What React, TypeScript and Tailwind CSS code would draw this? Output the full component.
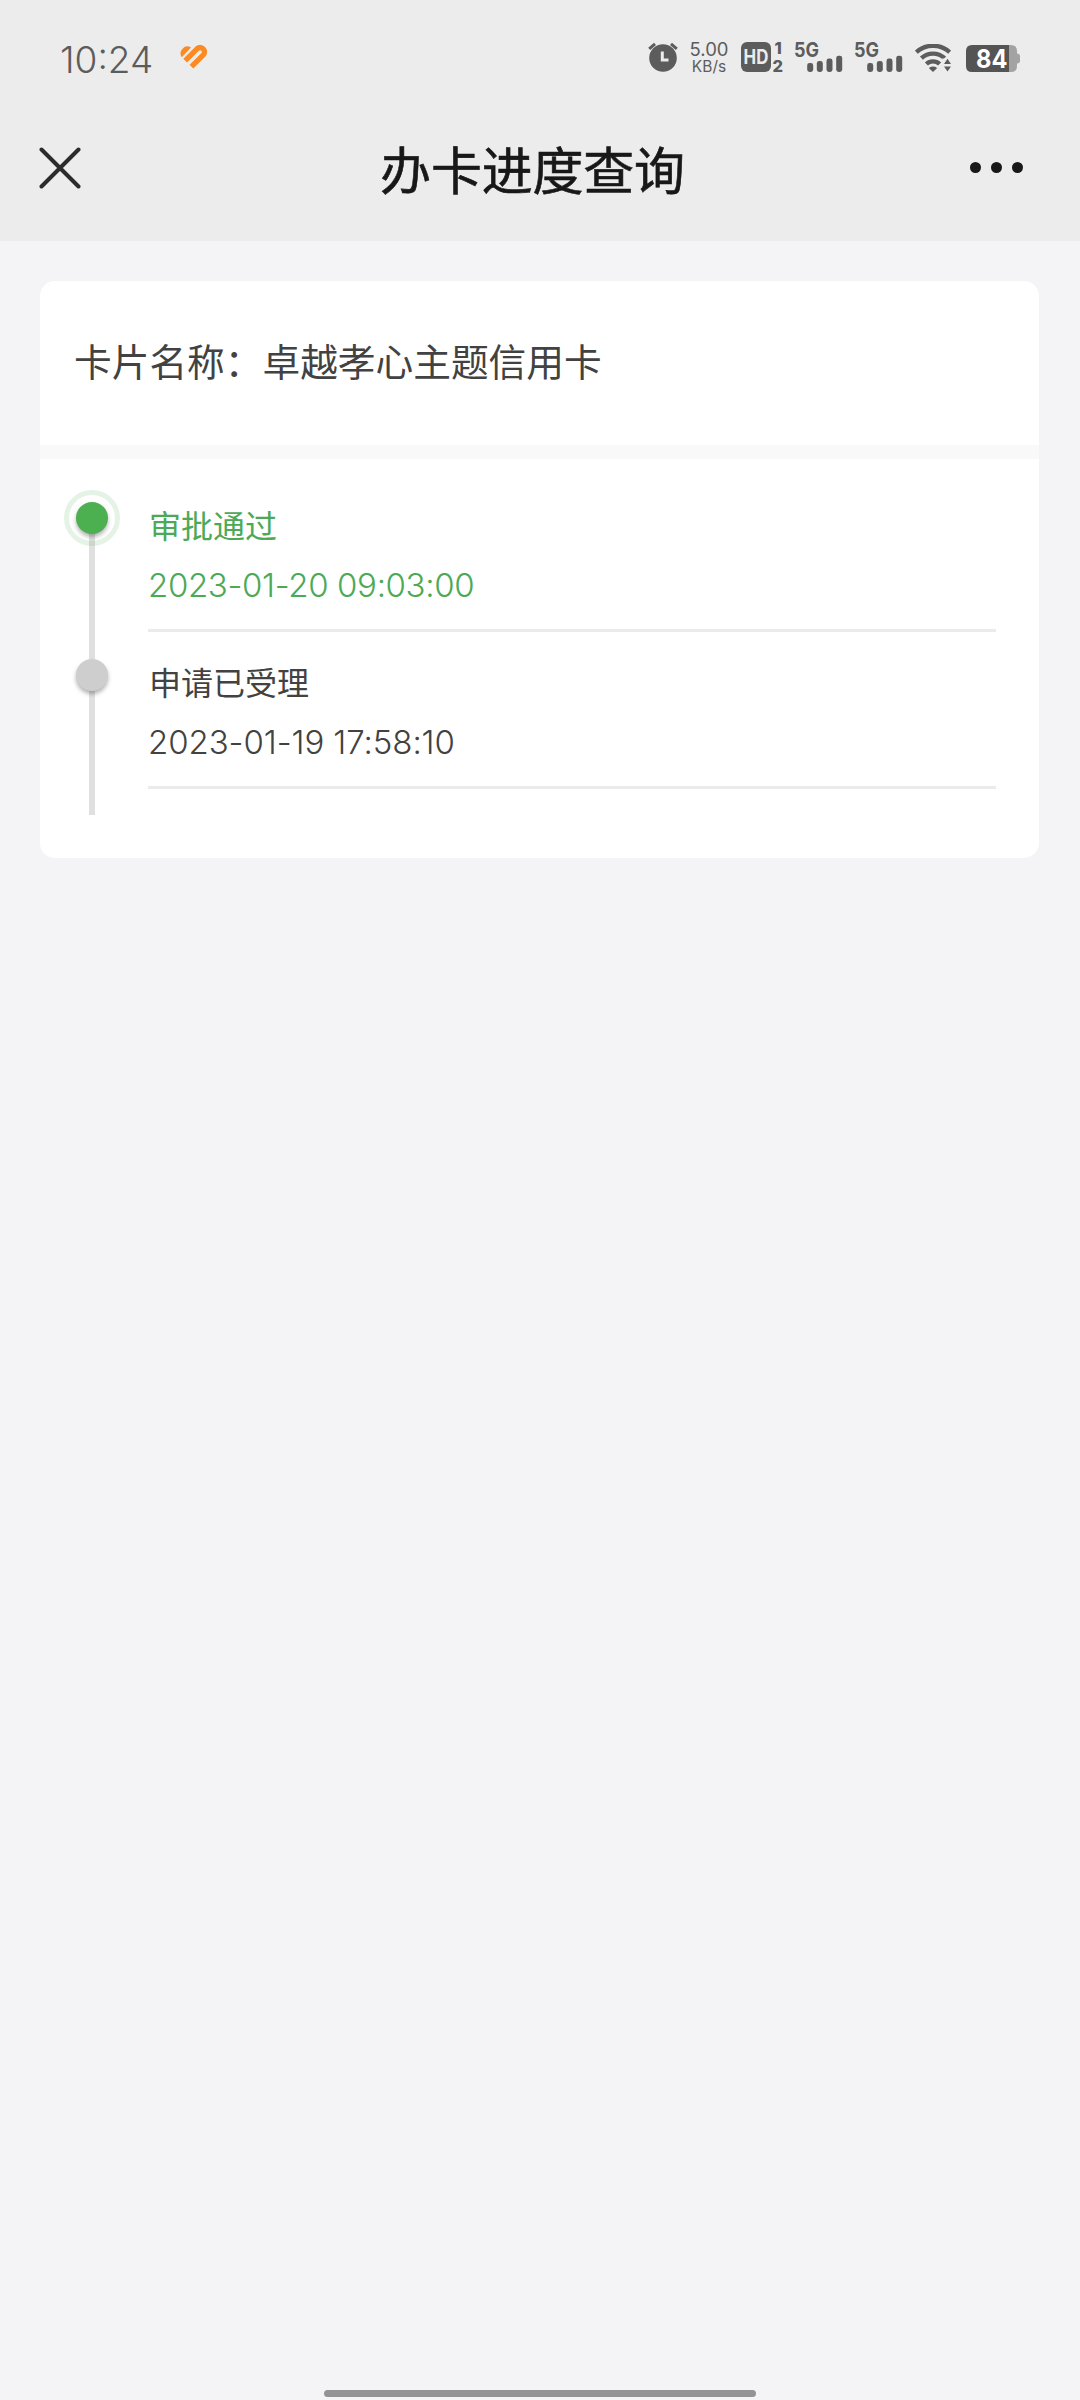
type Step = {
  title: string;
  time: string;
  active?: boolean;
};

const steps: Step[] = [
  { title: "审批通过", time: "2023-01-20 09:03:00", active: true },
  { title: "申请已受理", time: "2023-01-19 17:58:10" },
];

const HeartIcon = () => (
  <svg width="28" height="24" viewBox="0 0 28 24" fill="none">
    <path d="M2.8 12.2 A6.9 6.9 0 0 1 12 2.4 Z" fill="#fc8a20" />
    <path
      d="M6.2 15.6 L18.2 3.6 A4.4 4.4 0 0 1 24.4 9.8 L12.5 21.7"
      stroke="#fc8a20"
      strokeWidth="5.3"
    />
  </svg>
);

const AlarmIcon = () => (
  <svg width="30" height="30" viewBox="0 0 30 30" fill="none">
    <circle cx="15" cy="16" r="13.8" fill="#5c5c5c" />
    <path d="M1.2 6.8 L7 1.8 M28.8 6.8 L23 1.8" stroke="#5c5c5c" strokeWidth="3" />
    <path d="M14.3 9.5 V18 H20.5" stroke="#ececec" strokeWidth="3" />
  </svg>
);

const HdIcon = () => (
  <svg className="overflow-visible" width="43" height="30" viewBox="0 0 43 30">
    <rect width="30" height="30" rx="6" fill="#5c5c5c" />
    <g fontFamily="Inter, sans-serif" fontWeight="700">
      <text x="2.6" y="22.2" fontSize="19.5" fill="#ececec" textLength="24.8" lengthAdjust="spacingAndGlyphs">
        HD
      </text>
      <text x="33.5" y="12" fontSize="16.5" fontWeight="800" fill="#5c5c5c">
        1
      </text>
      <text x="31.4" y="29.8" fontSize="16.5" fontWeight="800" fill="#5c5c5c">
        2
      </text>
    </g>
  </svg>
);

const SignalIcon = () => (
  <svg className="overflow-visible" width="48" height="30" viewBox="0 0 48 30" fill="#5c5c5c">
    <text
      x="-1"
      y="14.8"
      fontFamily="Inter, sans-serif"
      fontWeight="700"
      fontSize="20"
      textLength="25"
      lengthAdjust="spacingAndGlyphs"
    >
      5G
    </text>
    <rect x="12.2" y="21" width="6" height="9" rx="2.4" />
    <rect x="21.8" y="19" width="6" height="11" rx="2.4" />
    <rect x="31.5" y="16.5" width="6" height="13.5" rx="2.4" />
    <rect x="41.2" y="13.7" width="6" height="16.3" rx="2.4" />
  </svg>
);

const WifiIcon = () => (
  <svg width="36" height="28" viewBox="0 0 36 28" fill="none">
    <g stroke="#5c5c5c" strokeWidth="4.4">
      <path d="M1.3 8.2 A25 25 0 0 1 34.7 8.2" />
      <path d="M6.4 14.2 A17 17 0 0 1 29.6 14.2" />
      <path d="M11.4 20 A9.5 9.5 0 0 1 24.6 20" />
    </g>
    <path d="M13.8 24 Q18 21.2 22.2 24 L18 28 Z" fill="#5c5c5c" />
    <path d="M27.2 28 V14.5 H36 V28 Z" fill="#ececec" />
    <path d="M29 20 L32.5 14.8 L36 20 Z M29 22.4 H36 L32.5 27.6 Z" fill="#5c5c5c" />
  </svg>
);

const BatteryIcon = () => (
  <svg className="overflow-visible" width="54" height="27" viewBox="0 0 54 27">
    <path d="M43 0 H45 Q51 0 51 6 V8.5 Q54 9 54 11 V16 Q54 18 51 18.5 V21 Q51 27 45 27 H43 Z" fill="#a3a3a3" />
    <path d="M6 0 H43 V27 H6 Q0 27 0 21 V6 Q0 0 6 0 Z" fill="#545454" />
    <text
      x="10"
      y="23.2"
      fontFamily="Inter, sans-serif"
      fontWeight="700"
      fontSize="25.4"
      fill="#ffffff"
      textLength="31.4"
      lengthAdjust="spacingAndGlyphs"
    >
      84
    </text>
  </svg>
);

const StatusBar = () => (
  <div className="flex h-[90px] items-end justify-between px-[60px] pb-[18px] text-[#5c5c5c]">
    <div className="flex items-end">
      <span className="h-[36px] w-[119px] whitespace-nowrap text-[37px] font-[350] leading-[47px]">
        10:24
      </span>
      <div className="pb-[3px]">
        <HeartIcon />
      </div>
    </div>
    <div className="flex items-end">
      <AlarmIcon />
      <div className="ml-[12px] mr-[13px] flex h-[32px] w-[38px] flex-col items-center whitespace-nowrap">
        <span className="text-[18.5px] leading-[19px]">5.00</span>
        <span className="text-[15.5px] leading-[16px]">KB/s</span>
      </div>
      <HdIcon />
      <div className="ml-[11px]">
        <SignalIcon />
      </div>
      <div className="ml-[12px]">
        <SignalIcon />
      </div>
      <div className="ml-[12px]">
        <WifiIcon />
      </div>
      <div className="ml-[15px]">
        <BatteryIcon />
      </div>
    </div>
  </div>
);

const NavBar = () => (
  <div className="flex h-[151px] items-start justify-between pl-[39px] pr-[57px] text-[#181818]">
    <button className="mt-[57px]" aria-label="关闭">
      <svg width="42" height="42" viewBox="0 0 42 42" fill="none" stroke="#2c2c2c" strokeWidth="4" strokeLinecap="round">
        <path d="M2.5 2.5 L39.5 39.5 M39.5 2.5 L2.5 39.5" />
      </svg>
    </button>
    <h1 className="ml-[14px] mt-[46px] text-[51px] leading-[72px] tracking-[-0.2px] [-webkit-text-stroke:0.6px_#181818]">
      办卡进度查询
    </h1>
    <button className="mt-[72px] flex gap-[10px]" aria-label="更多">
      <span className="size-[11px] rounded-full bg-[#181818]" />
      <span className="size-[11px] rounded-full bg-[#181818]" />
      <span className="size-[11px] rounded-full bg-[#181818]" />
    </button>
  </div>
);

const TimelineItem = ({ title, time, active }: Step) => (
  <li className={`flex ${active ? "h-[157px] text-[#4ca956]" : "h-[156px] text-[#424242]"}`}>
    {/* Dot and rail */}
    <div className="relative flex w-[56px] shrink-0 flex-col items-center">
      <div
        className={`z-10 size-[32px] shrink-0 rounded-full shadow-[0_3px_4px_rgba(0,0,0,0.3)] ${
          active ? "bg-[#4caf50]" : "bg-[#cecece]"
        }`}
      />
      <div className="-mt-[2px] w-[6px] grow bg-[#e0e0e0]" />
      {active && (
        <div className="absolute -top-[12px] left-0 z-10 size-[56px] rounded-full border-[5px] border-[#4caf50]/15" />
      )}
    </div>
    <div className="ml-[28px] h-[130px] grow border-b-[3px] border-[#ebebeb]">
      <p className="ml-[1px] mt-[1px] text-[32px] leading-[48px]">{title}</p>
      <p
        className={`mt-[9px] whitespace-nowrap text-[33px] font-[350] leading-[50px] ${
          active ? "tracking-[-0.35px]" : "tracking-[-0.08px]"
        }`}
      >
        {time}
      </p>
    </div>
  </li>
);

const App = () => {
  return (
    <div className="flex h-[2400px] w-[1080px] flex-col overflow-hidden bg-[#f4f4f6] font-[Inter,'Noto_Sans_CJK_SC',sans-serif]">
      <header className="bg-[#ececec]">
        <StatusBar />
        <NavBar />
      </header>

      <main className="ml-[40px] mr-[41px] mt-[40px] grow">
        <div className="h-[577px] overflow-hidden rounded-[15px] bg-white">
          <div className="h-[164px] pl-[34px] pt-[53px] text-[37.7px] leading-[56px] text-[#424242]">
            卡片名称：卓越孝心主题信用卡
          </div>
          <div className="h-[14px] bg-[#f9f9f9]" />
          <ul className="pl-[24px] pr-[43px] pt-[43px]">
            {steps.map((step) => (
              <TimelineItem key={step.time} {...step} />
            ))}
          </ul>
        </div>
      </main>

      {/* Home indicator */}
      <div className="mb-[3px] flex justify-center">
        <div className="h-[7px] w-[432px] rounded-full bg-[#939393]" />
      </div>
    </div>
  );
};

export default App;
